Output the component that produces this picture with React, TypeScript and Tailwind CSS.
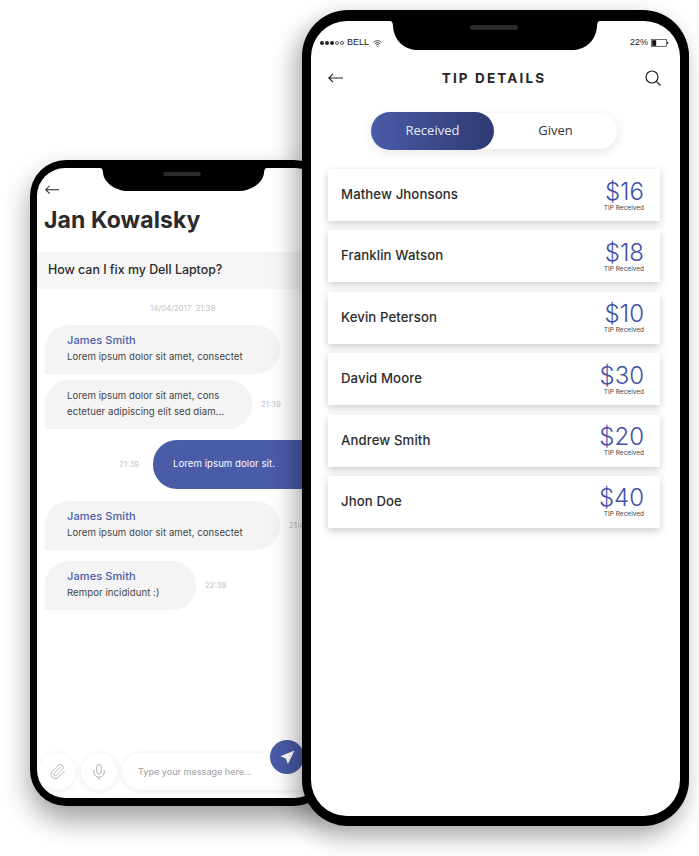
import { Mic, Paperclip } from "lucide-react";

const tips = [
  ["Mathew Jhonsons", "$16"],
  ["Franklin Watson", "$18"],
  ["Kevin Peterson", "$10"],
  ["David Moore", "$30"],
  ["Andrew Smith", "$20"],
  ["Jhon Doe", "$40"],
];

function Back({ w = 15 }: { w?: number }) {
  return (
    <svg width={w} height={(w * 10) / 15} viewBox="0 0 15 10" fill="none" stroke="#222" strokeWidth="1.1">
      <path d="M15 5H0.8M5 0.8L0.8 5L5 9.2" />
    </svg>
  );
}

function Notch({ w, h }: { w: number; h: number }) {
  return (
    <svg width={w} height={h} viewBox={`0 0 ${w} ${h}`} fill="#000">
      <path d={`M0 0H${w}C${w - 2} 0 ${w - 3} 2 ${w - 3} 5C${w - 4} ${h - 8} ${w - 16} ${h} ${w - 28} ${h}H28C16 ${h} 4 ${h - 8} 3 5C3 2 2 0 0 0Z`} />
    </svg>
  );
}

function Bubble({ name, lines, w, time }: { name?: string; lines: string[]; w: string; time: string }) {
  return (
    <div className="flex items-center">
      <div className={`${w} h-[49px] shrink-0 rounded-t-[24px] rounded-br-[24px] bg-[#f4f4f4] pl-[22px] pb-[2px] flex flex-col justify-center`}>
        {name && <div className="text-[11px] leading-[15px] font-medium text-[#4a5ba8] tracking-[0.1px]">{name}</div>}
        {lines.map((l) => (
          <div key={l} className={`text-[9.6px] text-[#444] tracking-[0.06px] whitespace-nowrap ${name ? "leading-[16px] mt-[1px]" : "leading-[16px]"}`}>
            {l}
          </div>
        ))}
      </div>
      <span className="ml-[9px] text-[7.8px] text-[#c4c4c4] whitespace-nowrap">{time}</span>
    </div>
  );
}

function ChatPhone() {
  return (
    <div className="absolute left-[30px] top-[160px] w-[300px] h-[646px] rounded-[36px] bg-black px-[7px] py-[8px] shadow-[0_14px_28px_rgba(0,0,0,0.38)]">
      <div className="relative w-full h-full rounded-[28px] bg-white overflow-hidden flex flex-col font-['Inter',sans-serif]">
        <div className="absolute left-[63px] top-0">
          <Notch w={167} h={23} />
          <div className="absolute left-[63px] top-[4px] w-[38px] h-[4px] rounded-full bg-[#2a2a2a]" />
        </div>
        <div className="pl-[8px] pt-[17px] h-[30px]">
          <Back w={14} />
        </div>
        <h1 className="pl-[7px] mt-[8px] text-[23px] leading-[28px] font-bold text-[#2b2b2b] tracking-[0.1px]">Jan Kowalsky</h1>
        <div className="mt-[18px] h-[37px] bg-[#f6f6f6] pl-[11px] flex items-center text-[12.4px] font-medium text-[#2b2b2b]">
          How can I fix my Dell Laptop?
        </div>
        <div className="mt-[14px] pl-[113px] text-[8px] leading-[10px] text-[#c4c4c4] tracking-[-0.1px] whitespace-nowrap">14/04/2017&nbsp;&nbsp;21:39</div>
        <div className="mt-[12px] pl-[8px] flex flex-col gap-[6px]">
          <Bubble name="James Smith" lines={["Lorem ipsum dolor sit amet, consectet"]} w="w-[235px]" time="" />
          <Bubble lines={["Lorem ipsum dolor sit amet, cons", "ectetuer adipiscing elit sed diam..."]} w="w-[207px]" time="21:39" />
          <div className="flex items-center mt-[5px] mb-[6px] pl-[74px]">
            <span className="w-[34px] text-[7.8px] text-[#c4c4c4]">21:39</span>
            <div className="w-[170px] h-[49px] rounded-l-[24px] bg-[#4a5ba8] pl-[20px] flex items-center text-[9.6px] text-white tracking-[0.06px] whitespace-nowrap">
              Lorem ipsum dolor sit.
            </div>
          </div>
          <Bubble name="James Smith" lines={["Lorem ipsum dolor sit amet, consectet"]} w="w-[235px]" time="21:40" />
          <div className="mt-[5px]">
            <Bubble name="James Smith" lines={["Rempor incididunt :)"]} w="w-[151px]" time="22:39" />
          </div>
        </div>
        <div className="mt-auto mb-[8px] pl-[2px] flex items-center gap-[6px]">
          <div className="w-[36px] h-[37px] rounded-full bg-white shadow-[0_1px_6px_rgba(0,0,0,0.09)] flex items-center justify-center">
            <Paperclip size={17} strokeWidth={1} className="text-[#9a9a9a]" />
          </div>
          <div className="w-[36px] h-[37px] rounded-full bg-white shadow-[0_1px_6px_rgba(0,0,0,0.09)] flex items-center justify-center">
            <Mic size={18} strokeWidth={1} className="text-[#9a9a9a]" />
          </div>
          <div className="ml-[-1px] w-[200px] h-[37px] rounded-l-full bg-white shadow-[0_1px_6px_rgba(0,0,0,0.09)] pl-[16px] flex items-center text-[9px] font-medium text-[#aaa]">
            Type your message here...
          </div>
        </div>
        <div className="absolute left-[233px] top-[572px] w-[34px] h-[34px] rounded-full bg-[#4a5ba8] flex items-center justify-center">
          <svg width="15" height="15" viewBox="0 0 17 17" fill="#fff">
            <path d="M16.5 0.5L0.5 7L6.5 9.5L9 16Z" />
          </svg>
        </div>
      </div>
    </div>
  );
}

function TipPhone() {
  return (
    <div className="absolute left-[302px] top-[10px] w-[387px] h-[816px] rounded-[46px] bg-black px-[9px] pt-[11px] pb-[10px] shadow-[-6px_10px_24px_rgba(0,0,0,0.36)]">
      <div className="relative w-full h-full rounded-[36px] bg-white overflow-hidden font-['Inter',sans-serif]">
        <div className="absolute left-[79px] top-0">
          <Notch w={210} h={29} />
          <div className="absolute left-[80px] top-[4px] w-[48px] h-[5px] rounded-full bg-[#2a2a2a]" />
        </div>
        <div className="h-[22px] mt-[11px] ml-[9px] mr-[11px] flex items-center justify-between font-['Liberation_Sans',sans-serif] text-[9px] text-[#222]">
          <div className="flex items-center gap-[3px]">
            <span className="flex items-center gap-[1px]">
              <i className="w-[4px] h-[4px] rounded-full bg-[#222]" />
              <i className="w-[4px] h-[4px] rounded-full bg-[#222]" />
              <i className="w-[4px] h-[4px] rounded-full bg-[#222]" />
              <i className="w-[4px] h-[4px] rounded-full border-[0.5px] border-[#555]" />
              <i className="w-[4px] h-[4px] rounded-full border-[0.5px] border-[#555]" />
            </span>
            <span>BELL</span>
            <svg className="ml-[1px]" width="9" height="7" viewBox="0 0 10 8" fill="none" stroke="#222" strokeWidth="1">
              <path d="M0.5 2.6C3 0.2 7 0.2 9.5 2.6M2 4.2C3.7 2.7 6.3 2.7 8 4.2M3.5 5.7C4.4 5 5.6 5 6.5 5.7" />
              <path d="M4.2 6.8L5 7.6L5.8 6.8" />
            </svg>
          </div>
          <div className="flex items-center gap-[3px]">
            <span>22%</span>
            <svg width="18" height="8" viewBox="0 0 18 8">
              <rect x="0.4" y="0.4" width="15.2" height="7.2" fill="none" stroke="#333" strokeWidth="0.7" />
              <rect x="1.2" y="1.2" width="4" height="5.6" fill="#111" />
              <rect x="16" y="3" width="1.2" height="2" fill="#333" />
            </svg>
          </div>
        </div>
        <div className="mt-[12px] h-[24px] pl-[17px] pr-[19px] flex items-center justify-between">
          <Back />
          <div className="text-[13.5px] font-bold tracking-[2.15px] text-[#262626]">TIP DETAILS</div>
          <svg width="16" height="16" viewBox="0 0 16 16" fill="none" stroke="#222" strokeWidth="1.2">
            <circle cx="7" cy="7" r="6" />
            <path d="M11.3 11.3L15.5 15.5" />
          </svg>
        </div>
        <div className="mt-[23px] ml-[60px] w-[246px] h-[36px] rounded-full bg-white shadow-[0_3px_12px_rgba(0,0,0,0.1)] flex items-center font-['Open_Sans',sans-serif] text-[13px]">
          <div className="w-[123px] h-[38px] rounded-full bg-gradient-to-r from-[#4a5ba8] to-[#2f3a72] text-[#e8ebf5] flex items-center justify-center">Received</div>
          <div className="flex-1 text-center text-[#333]">Given</div>
        </div>
        <div className="mt-[20px] ml-[17px] w-[332px] flex flex-col gap-[9.4px]">
          {tips.map(([name, amount]) => (
            <div key={name} className="h-[52px] bg-white shadow-[0_3px_8px_rgba(0,0,0,0.2)] pl-[13px] pr-[16px] flex items-center justify-between">
              <span className="text-[13.2px] font-medium text-[#2b2b2b] tracking-[0.1px]">{name}</span>
              <div className="flex flex-col items-end mt-[1px]">
                <span className="text-[24px] leading-[24px] font-light text-[#3f51a3]">{amount}</span>
                <span className="text-[6.5px] leading-[8px] text-[#444] whitespace-nowrap">TIP Received</span>
              </div>
            </div>
          ))}
        </div>
      </div>
    </div>
  );
}

export default function App() {
  return (
    <div className="relative w-[699px] h-[856px] bg-white overflow-hidden">
      <ChatPhone />
      <TipPhone />
    </div>
  );
}
